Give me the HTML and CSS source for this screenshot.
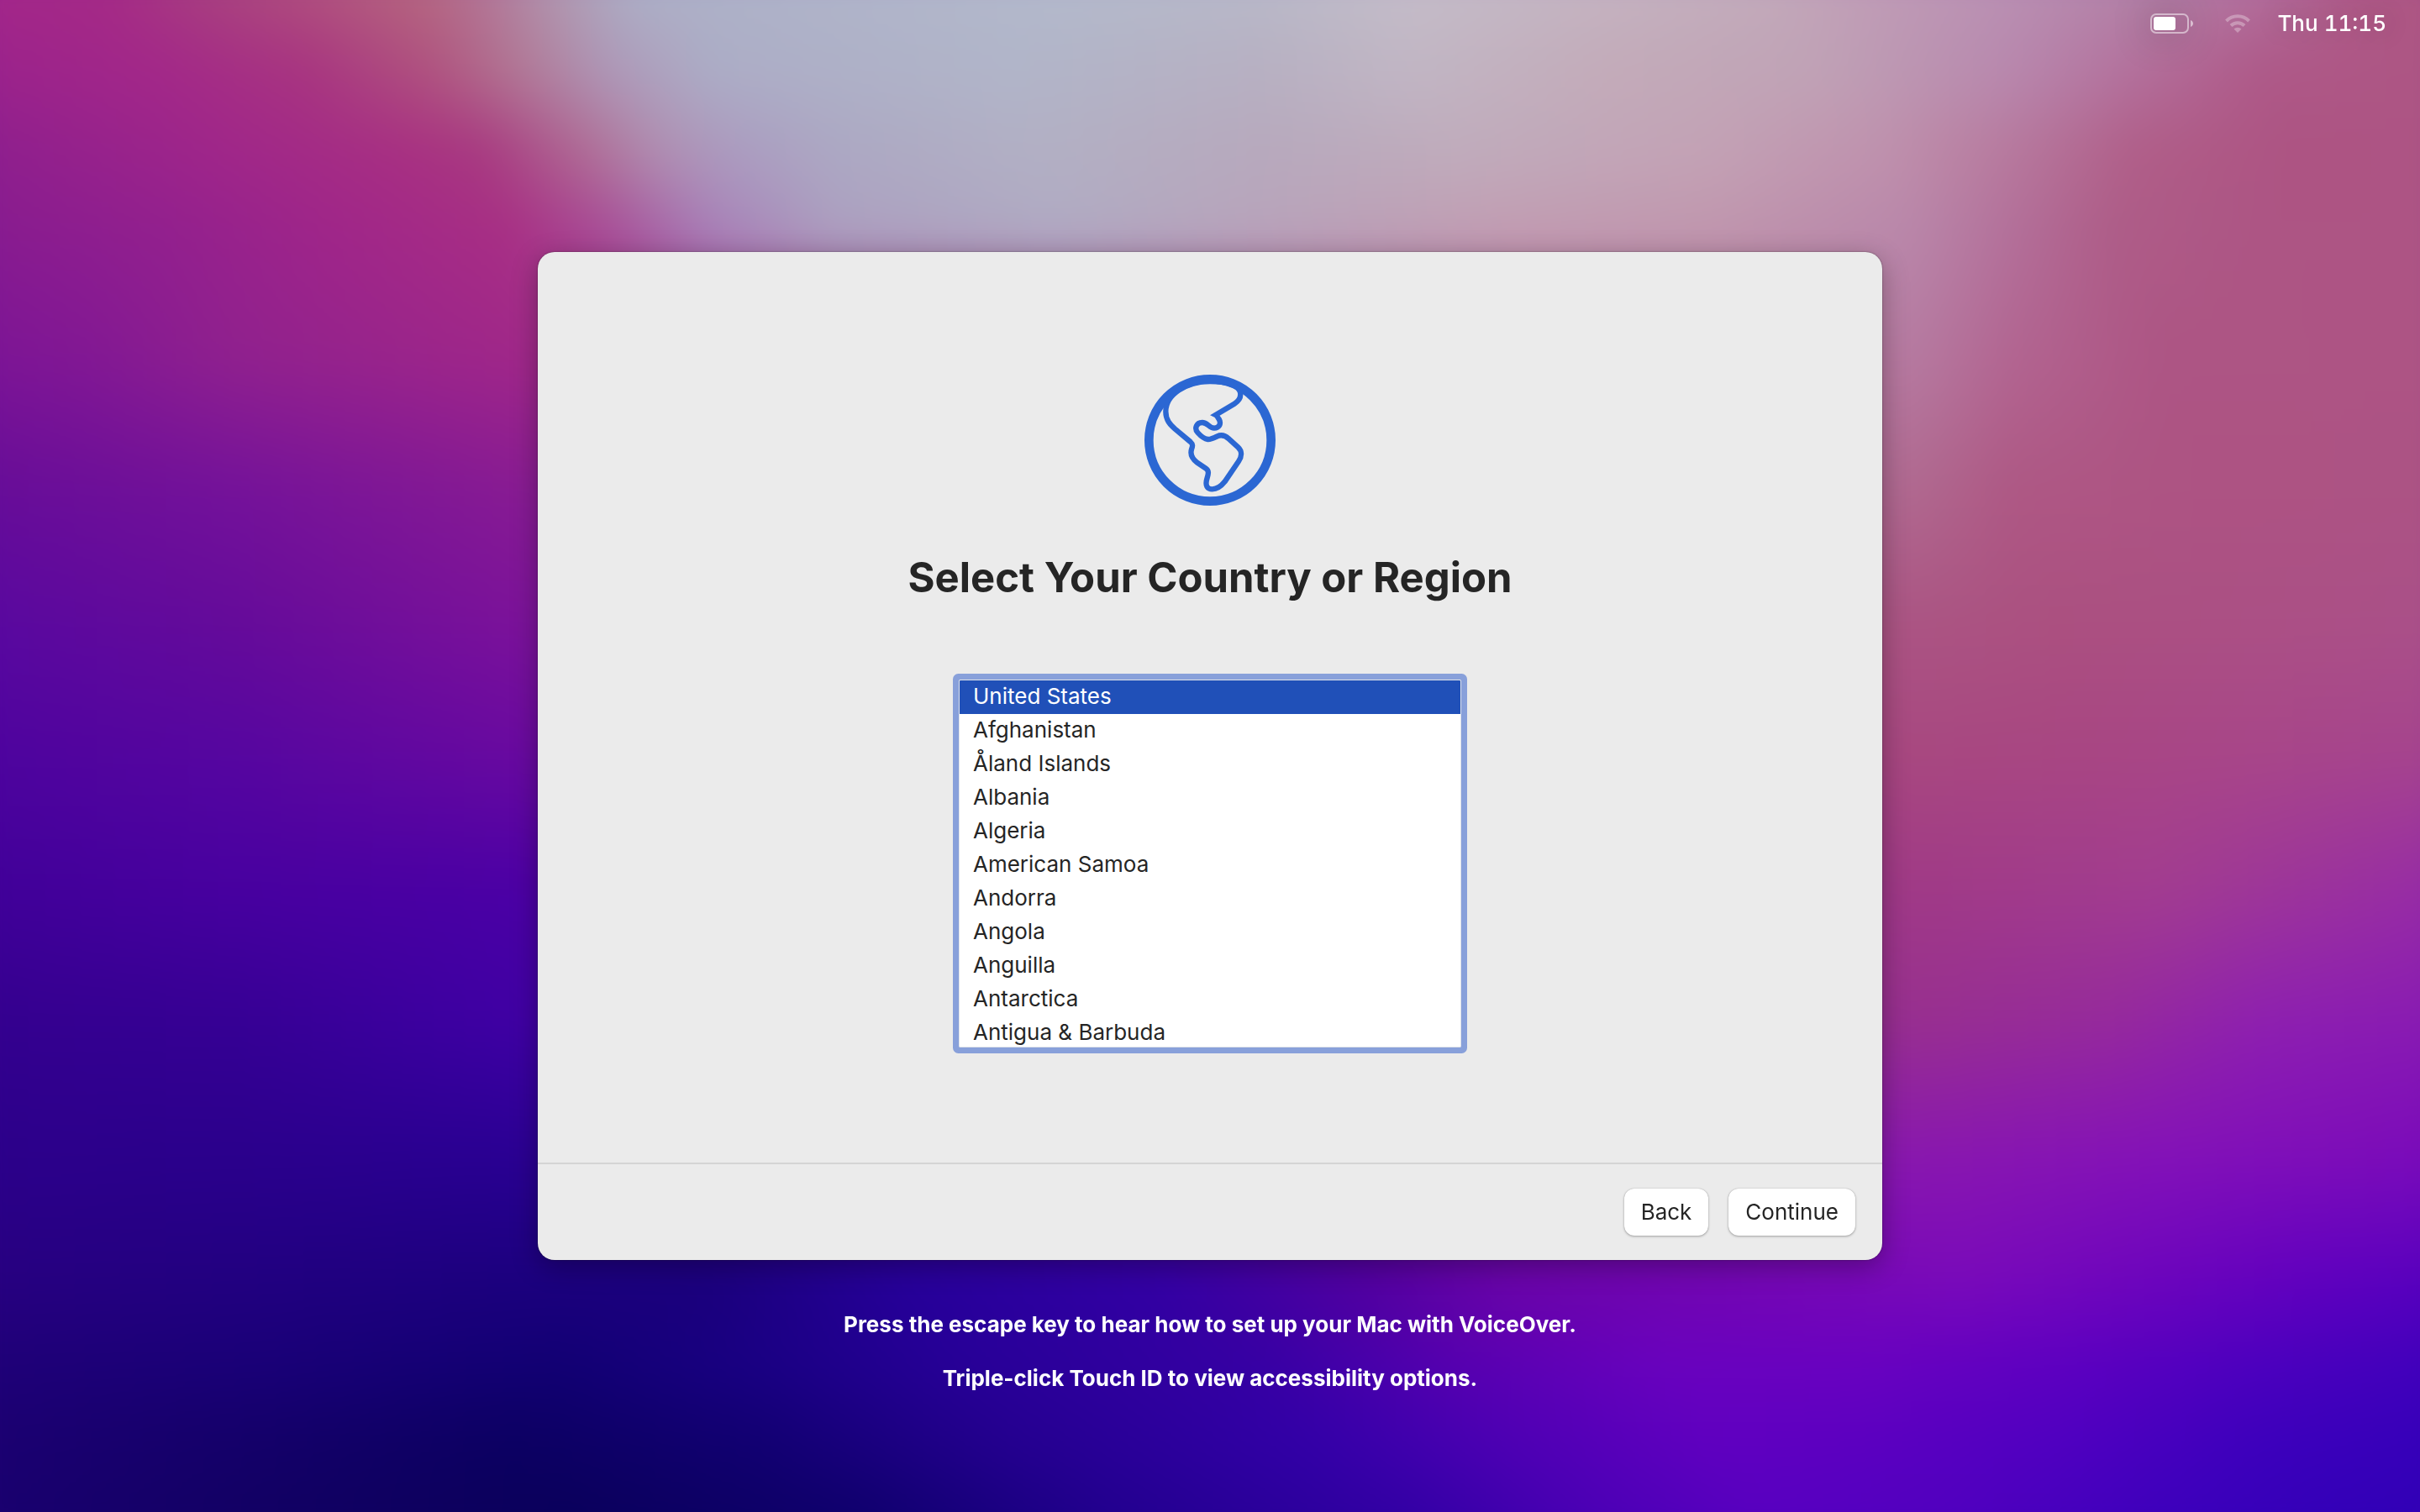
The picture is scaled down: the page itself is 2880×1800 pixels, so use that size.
FILE: index.html
```html
<!DOCTYPE html>
<html lang="en">
<head>
<meta charset="utf-8">
<title>Setup Assistant</title>
<link rel="stylesheet" href="styles.css">
</head>
<body>
<!-- colour bands, bottom one first so the upper ones fade over it -->
<div class="wallpaper">
  <div class="band band-15"></div>
  <div class="band band-14"></div>
  <div class="band band-13"></div>
  <div class="band band-12"></div>
  <div class="band band-11"></div>
  <div class="band band-10"></div>
  <div class="band band-9"></div>
  <div class="band band-8"></div>
  <div class="band band-7"></div>
  <div class="band band-6"></div>
  <div class="band band-5"></div>
  <div class="band band-4"></div>
  <div class="band band-3"></div>
  <div class="band band-2"></div>
  <div class="band band-1"></div>
</div>
<header class="menubar">
  <svg class="battery" viewBox="0 0 52 24" role="img" aria-label="Battery">
    <rect x="1" y="1" width="44" height="22" rx="6" fill="none" stroke="#fff" stroke-opacity=".5" stroke-width="2"/>
    <rect x="4" y="4" width="26" height="16" rx="3" fill="#fff"/>
    <path d="M48 8c4 1.500 4 6.500 0 8z" fill="#fff" fill-opacity=".55"/>
  </svg>
  <svg class="wifi" viewBox="0 0 30 22" role="img" aria-label="Wi-Fi">
    <path d="M1.500 8a19 19 0 0 1 27 0M7 13.500a11.300 11.300 0 0 1 16 0" fill="none" stroke="#fff" stroke-width="4"/>
    <path d="M10.500 17.500a6.400 6.400 0 0 1 9 0L15 22z" fill="#fff"/>
  </svg>
  <time class="clock">Thu 11:15</time>
</header>
<main class="panel">
  <div class="content">
    <svg class="globe" viewBox="66 48 468 468" aria-hidden="true">
      <circle cx="300" cy="282" r="218" stroke-width="32"/>
      <path stroke-width="19" d="M142 180C142 210 158 227 175 242L230 288C240 297 238 303 234 315C228 335 238 350 255 363L285 383C298 392 294 403 289 420C282 444 290 457 308 457C328 457 341 445 353 430L402 358C415 339 414 320 400 307L367 277C353 264 341 261 326 268C310 276 303 280 292 279C277 277 264 264 256 255C243 240 252 219 272 219C292 219 296 238 315 239C333 239 341 222 332 207C327 199 322 193 320 192L387 152C405 141 411 126 408 111C402 87 362 72 300 72C215 72 142 120 142 180Z"/>
    </svg>
    <h1 class="title" id="title">Select Your Country or Region</h1>
    <select class="countries" size="11" aria-labelledby="title">
      <option selected>United States</option>
      <option>Afghanistan</option>
      <option>Åland Islands</option>
      <option>Albania</option>
      <option>Algeria</option>
      <option>American Samoa</option>
      <option>Andorra</option>
      <option>Angola</option>
      <option>Anguilla</option>
      <option>Antarctica</option>
      <option>Antigua &amp; Barbuda</option>
    </select>
  </div>
  <div class="actions">
    <button type="button" class="btn">Back</button>
    <button type="button" class="btn">Continue</button>
  </div>
</main>
<footer class="hints">
  <p>Press the escape key to hear how to set up your Mac with VoiceOver.</p>
  <p>Triple-click Touch ID to view accessibility options.</p>
</footer>
</body>
</html>
```
FILE: styles.css
```css
*{
  box-sizing:border-box;
  margin:0;
  padding:0;
}
body{
  min-height:100vh;
  display:grid;
  grid-template-rows:1fr auto 1fr;
  justify-items:center;
  font-family:Inter, "Noto Sans", sans-serif;
  font-size:26px;
  line-height:32px;
  color:#252525;
  background:#4800a0;
}

/* wallpaper, runs past the window so the blur has no pale rim */
.wallpaper{
  position:fixed;
  inset:-48px;
  z-index:-1;
  display:grid;
  filter:blur(24px);
}
.band{
  grid-area:1 / 1;
  -webkit-mask-image:linear-gradient(#000 var(--from), transparent var(--to));
  mask-image:linear-gradient(#000 var(--from), transparent var(--to));
}
.band-1{
  --from:2%;
  --to:7%;
  background:linear-gradient(to right, #a3268a, #a52a86 6%, #a8407f 10%, #b04f7e 14%, #b5667f 18.5%, #b27596 21%, #b098b0 24%, #acafc6 27%, #afb3c9 34%, #b3b9cb 44%, #b8b8c8 52%, #c4bcc8 58%, #c4b2c0 66%, #c2aaba 72%, #c09db6 76%, #b98fb2 82%, #b17fa5 88%, #b26e9c 92%, #ad5885 96%, #ae5582);
}
.band-2{
  --from:7%;
  --to:12%;
  background:linear-gradient(to right, #9a228c, #a32889 8%, #a83580 14%, #b0547f 19%, #b27592 22%, #ae98b8 26%, #acadc6 30%, #b1b5c9 42%, #b7b0c2 52%, #c1b6c4 58%, #c3abb9 66%, #c0a3b6 74%, #b888ae 82%, #b3709c 87%, #ae5988 92%, #ad5583);
}
.band-3{
  --from:12%;
  --to:17%;
  background:linear-gradient(to right, #8c1e8e, #9f268a 10%, #a83082 18%, #a83a80 21%, #b06c94 25%, #b08fb2 28%, #ab9cc0 31%, #aca8c3 35%, #b2b0c4 43%, #b7a9bd 52%, #c0acbc 60%, #c3a2b5 70%, #bf91ad 77%, #b5749a 83%, #b05e88 87%, #ad5483 93%, #ad5484);
}
.band-4{
  --from:17%;
  --to:25%;
  background:linear-gradient(to right, #861b90, #92208e 8%, #a02689 15%, #a82f84 22%, #a84f98 26%, #a880b8 30%, #aca0c0 35%, #b0abc3 44%, #b8a4bb 52%, #c29db2 62%, #c097ae 70%, #b987aa 78%, #b3709a 82%, #ae5d88 86%, #ad5584 92%, #ad5484);
}
.band-5{
  --from:25%;
  --to:33.33%;
  background:linear-gradient(to right, #7b1496, #821894 5%, #90218e 11%, #a02789 22%, #b67ba1 78%, #b26591 82%, #ad5584 88%, #ad5484);
}
.band-6{
  --from:33.33%;
  --to:41.67%;
  background:linear-gradient(to right, #650c98, #74129a 11%, #871b93 22%, #b06a90 78%, #ae5884 82%, #ad5383 90%, #ac5384);
}
.band-7{
  --from:41.67%;
  --to:50%;
  background:linear-gradient(to right, #5808a0, #650b9a 11%, #7b129a 22%, #ab5583 78%, #ab5080 84%, #ab5085 92%, #aa5089);
}
.band-8{
  --from:50%;
  --to:58.33%;
  background:linear-gradient(to right, #4d039e, #5606a0 11%, #6809a0 22%, #a84880 78%, #a84683 85%, #a84689 92%, #a5438f);
}
.band-9{
  --from:58.33%;
  --to:66.67%;
  background:linear-gradient(to right, #400098, #4800a0 11%, #4b00a5 22%, #a03a86 78%, #a23d90 88%, #962aa8);
}
.band-10{
  --from:66.67%;
  --to:75%;
  background:linear-gradient(to right, #34008e, #360094 11%, #3f00a4 22%, #98308f 78%, #962a9c 86%, #8e20b0 92%, #881ab3);
}
.band-11{
  --from:75%;
  --to:83%;
  background:linear-gradient(to right, #2c008a, #2b008c 11%, #2a0093 22%, #8a18ae 78%, #8412b8 88%, #7a0aba);
}
.band-12{
  --from:83%;
  --to:88%;
  background:linear-gradient(to right, #280080, #220080 11%, #1c007e 22%, #1b007c 30%, #26009a 38%, #3200a4 48%, #50009f 56%, #6a04a8 62%, #7206b2 70%, #7a0aba 80%, #6c04bd 88%, #6000bf 94%, #5600be);
}
.band-13{
  --from:88%;
  --to:93%;
  background:linear-gradient(to right, #200078, #1a0078 12%, #120074 24%, #1b0085 32%, #280098 40%, #3700a4 52%, #5800b0 60%, #6a02be 68%, #6a02c0 76%, #5e00c0 84%, #4d00be 92%, #4000bb);
}
.band-14{
  --from:93%;
  --to:98%;
  background:linear-gradient(to right, #1c0072, #140069 12%, #0c0062 22%, #120072 32%, #250090 42%, #3300a8 54%, #4e00b4 62%, #6000c0 70%, #5c00c0 76%, #5000c0 84%, #3d00bc 92%, #3500b9);
}
.band-15{
  -webkit-mask-image:none;
  mask-image:none;
  background:linear-gradient(to right, #1a0070, #120063 12%, #0a005a 24%, #0f006c 36%, #22008e 46%, #3200a4 58%, #4a00b4 65%, #5800c0 72%, #5000bf 80%, #3d00bc 88%, #3400b8 94%, #3000b5);
}

/* menu bar */
.menubar{
  justify-self:end;
  align-self:start;
  display:flex;
  align-items:center;
  height:56px;
  padding-right:40px;
  color:#fff;
}
.battery{
  width:52px;
  height:24px;
  margin-right:37px;
  filter:drop-shadow(0 0 24px rgba(0,0,0,.4));
}
.wifi{
  width:30px;
  height:22px;
  margin-right:32px;
  opacity:.3;
}
.clock{
  font-weight:500;
  font-variant-numeric:tabular-nums;
  text-shadow:0 0 32px rgba(0,0,0,.3);
}

/* setup panel */
.panel{
  width:90%;
  max-width:1600px;
  background:#ebebeb;
  border-radius:20px;
  box-shadow:0 0 2px rgba(0,0,0,.5), 0 8px 32px rgba(0,0,0,.3);
}
.content{
  display:flex;
  flex-direction:column;
  align-items:center;
  padding:146px 32px 137px;
}
.globe{
  width:156px;
  height:156px;
  fill:none;
  stroke:#2b67d3;
}
.title{
  margin:54px 0 89px;
  font-size:49px;
  line-height:64px;
  font-weight:700;
}
.countries{
  width:100%;
  max-width:598px;
  height:438px;
  border:1px solid #dfe3ea;
  border-radius:2px;
  outline:0;
  box-shadow:0 0 0 7px #88a0da;
  background:#fff;
  font:inherit;
  color:#252525;
  overflow-y:auto;
  scrollbar-width:none;
}
.countries option{
  min-height:40px;
  padding:3px 16px 5px;
  line-height:32px;
}
.countries option:checked{
  background:#2050b8 linear-gradient(#2050b8, #2050b8);
  color:#fff;
}
.actions{
  display:flex;
  justify-content:flex-end;
  gap:24px;
  padding:29px 32px;
  border-top:2px solid #d4d4d4;
}
.btn{
  height:56px;
  padding:0 20px;
  border:0;
  border-radius:12px;
  background:#fff;
  box-shadow:0 0 1px rgba(0,0,0,.3), 0 1px 3px rgba(0,0,0,.3);
  font:inherit;
  color:#252525;
}

.hints{
  padding:61px 24px;
  display:flex;
  flex-direction:column;
  gap:32px;
  text-align:center;
  font-weight:700;
  color:#fff;
}
```
